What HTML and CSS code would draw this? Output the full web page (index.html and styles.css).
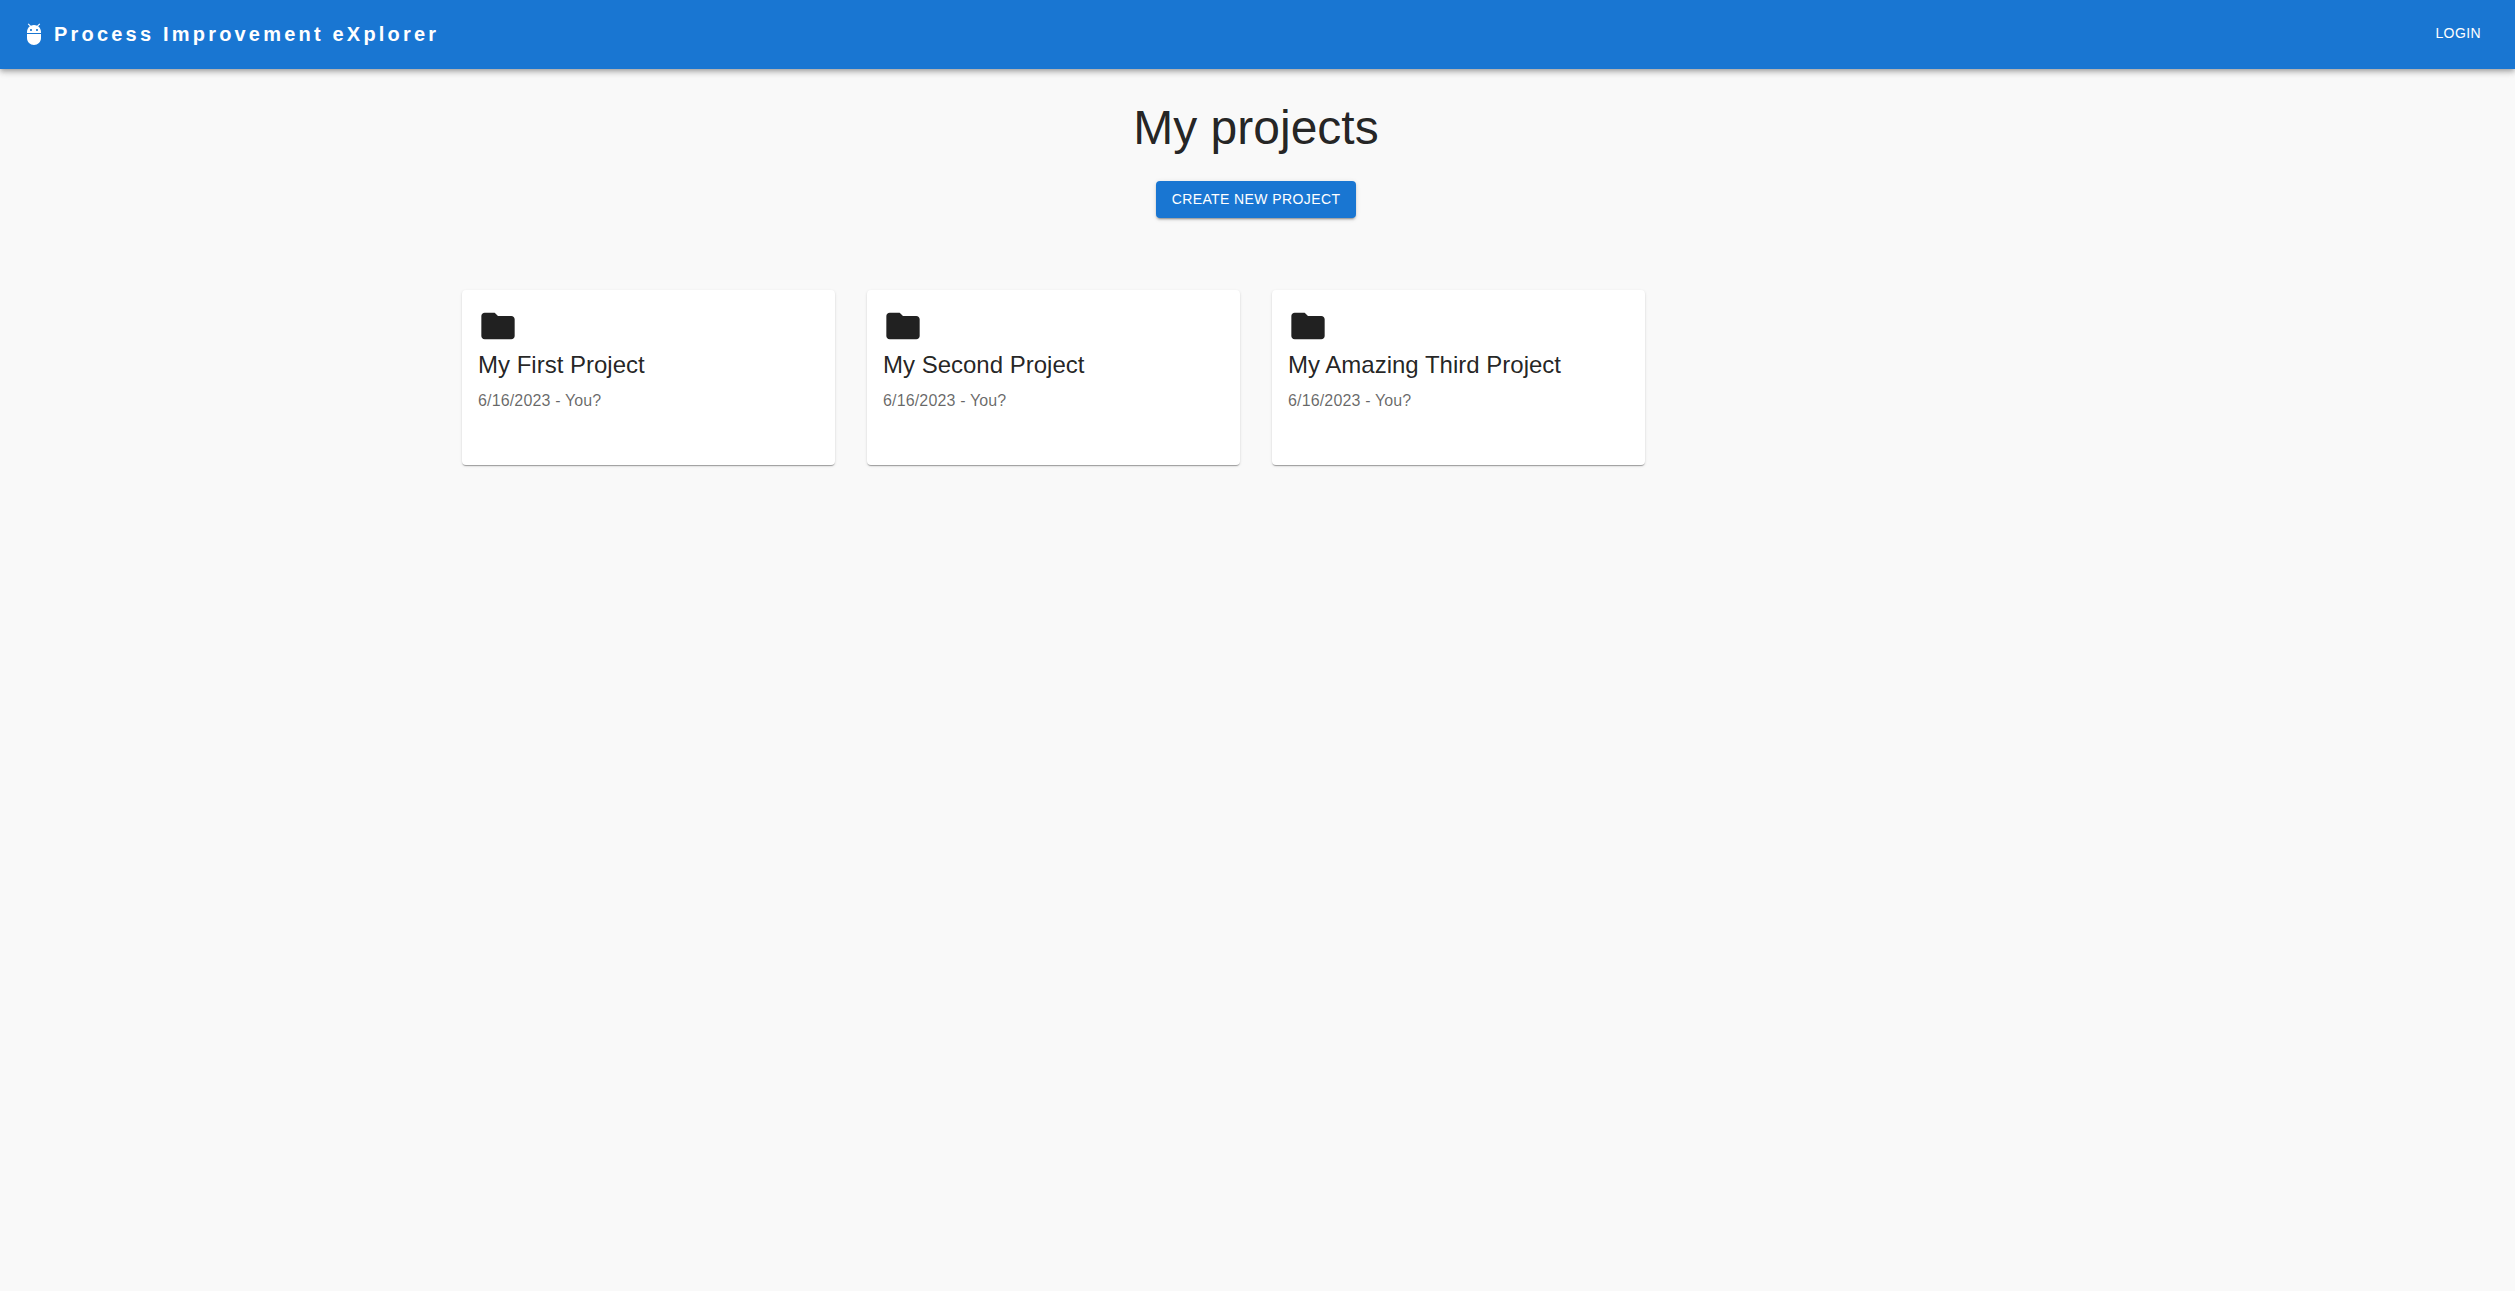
FILE: index.html
```html
<!DOCTYPE html>
<html lang="en">
<head>
<meta charset="utf-8">
<meta name="viewport" content="width=device-width, initial-scale=1">
<title>Process Improvement eXplorer</title>
<link rel="stylesheet" href="styles.css">
</head>
<body>
<header class="app-bar">
  <svg class="brand-icon" viewBox="0 0 24 24" aria-hidden="true"><path d="M5 16c0 3.870 3.130 7 7 7s7-3.130 7-7v-4H5v4zM16.120 4.370l2.100-2.100-.820-.830-2.300 2.310C14.160 3.280 13.120 3 12 3s-2.160.280-3.090.750L6.600 1.440l-.830.830 2.100 2.100C6.140 5.640 5 7.680 5 10v1h14v-1c0-2.320-1.140-4.360-2.880-5.630zM9 9c-.550 0-1-.450-1-1s.450-1 1-1 1 .450 1 1-.450 1-1 1zm6 0c-.550 0-1-.450-1-1s.450-1 1-1 1 .450 1 1-.450 1-1 1z"/></svg>
  <a class="brand" href="#">Process Improvement eXplorer</a>
  <button class="login" type="button">Login</button>
</header>
<main>
  <section class="hero">
    <h1>My projects</h1>
    <button class="create" type="button">Create new project</button>
  </section>
  <section class="projects">
    <article class="card">
      <svg class="folder" viewBox="0 0 24 24" aria-hidden="true"><path d="M10 4H4c-1.100 0-1.990.900-1.990 2L2 18c0 1.100.900 2 2 2h16c1.100 0 2-.900 2-2V8c0-1.100-.900-2-2-2h-8l-2-2z"/></svg>
      <h2>My First Project</h2>
      <p>6/16/2023 - You?</p>
    </article>
    <article class="card">
      <svg class="folder" viewBox="0 0 24 24" aria-hidden="true"><path d="M10 4H4c-1.100 0-1.990.900-1.990 2L2 18c0 1.100.900 2 2 2h16c1.100 0 2-.900 2-2V8c0-1.100-.900-2-2-2h-8l-2-2z"/></svg>
      <h2>My Second Project</h2>
      <p>6/16/2023 - You?</p>
    </article>
    <article class="card">
      <svg class="folder" viewBox="0 0 24 24" aria-hidden="true"><path d="M10 4H4c-1.100 0-1.990.900-1.990 2L2 18c0 1.100.900 2 2 2h16c1.100 0 2-.900 2-2V8c0-1.100-.900-2-2-2h-8l-2-2z"/></svg>
      <h2>My Amazing Third Project</h2>
      <p>6/16/2023 - You?</p>
    </article>
  </section>
</main>
</body>
</html>
```

FILE: styles.css
```css
* { box-sizing: border-box; }

body {
  margin: 0;
  background: #f9f9f9;
  color: rgba(0, 0, 0, 0.87);
  font-family: "Liberation Sans", Arial, sans-serif;
  font-size: 16px;
  line-height: 24px;
}

h1, h2, p { margin: 0; font-weight: 400; }

button {
  border: 0;
  font: inherit;
  font-size: 14px;
  line-height: 25px;
  letter-spacing: 0.02857em;
  text-transform: uppercase;
  cursor: pointer;
}

.app-bar {
  display: flex;
  align-items: center;
  height: 69px;
  padding: 0 26px 2px 22px;
  background: #1976d2;
  color: #fff;
  box-shadow: 0 2px 4px -1px rgba(0, 0, 0, 0.2), 0 4px 5px rgba(0, 0, 0, 0.14), 0 1px 10px rgba(0, 0, 0, 0.12);
}

.brand-icon {
  width: 24px;
  height: 24px;
  margin-right: 8px;
  fill: currentColor;
}

.brand {
  flex: 1;
  color: inherit;
  font-size: 20px;
  font-weight: 700;
  letter-spacing: 0.2rem;
  text-decoration: none;
}

.login {
  padding: 6px 8px;
  background: transparent;
  color: inherit;
}

main { padding-right: 3px; }

.hero {
  display: flex;
  flex-direction: column;
  align-items: center;
  gap: 24px;
  padding: 30px 24px 72px;
}

.hero h1 { font-size: 48px; line-height: 58px; }

.create {
  padding: 6px 16px;
  border-radius: 4px;
  background: #1976d2;
  color: #fff;
  box-shadow: 0 3px 1px -2px rgba(0, 0, 0, 0.2), 0 2px 2px rgba(0, 0, 0, 0.14), 0 1px 5px rgba(0, 0, 0, 0.12);
}

.projects {
  display: grid;
  grid-template-columns: repeat(4, 1fr);
  gap: 32px;
  max-width: 1588px;
  margin: 0 auto;
  padding: 0 0 32px;
}

.card {
  min-height: 175px;
  padding: 16px;
  border-radius: 4px;
  background: #fff;
  box-shadow: 0 2px 1px -1px rgba(0, 0, 0, 0.2), 0 1px 1px rgba(0, 0, 0, 0.14), 0 1px 3px rgba(0, 0, 0, 0.12);
}

.folder { display: block; width: 40px; height: 40px; fill: currentColor; }
.card h2 { margin-top: 3px; font-size: 24px; line-height: 32px; }
.card p { margin-top: 8px; color: rgba(0, 0, 0, 0.6); letter-spacing: 0.00938em; }
```
